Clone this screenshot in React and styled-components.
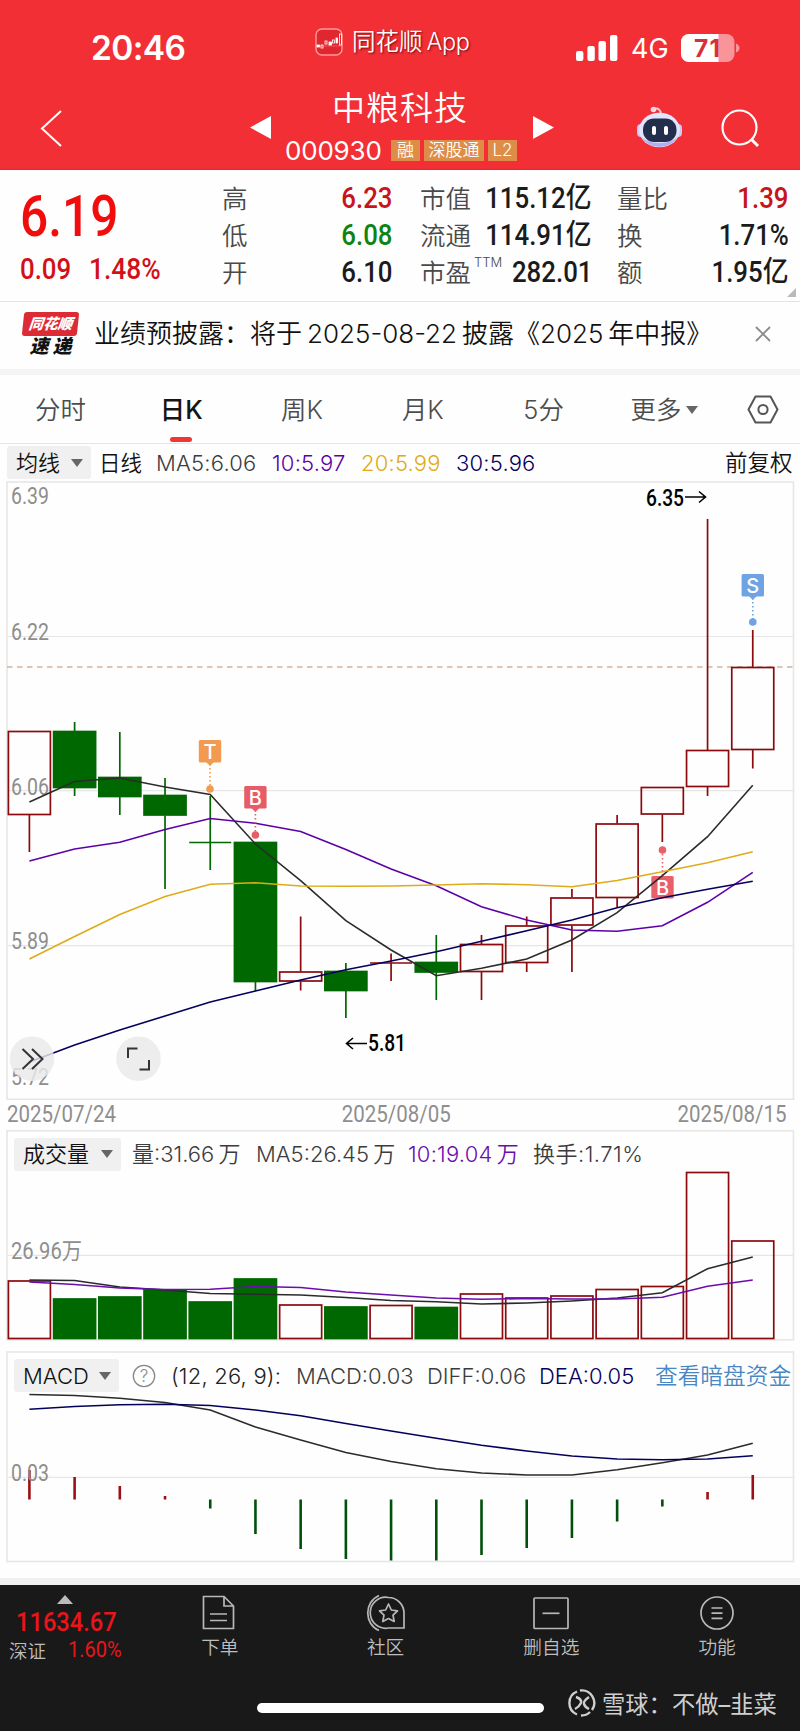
import React from 'react';
import styled, { createGlobalStyle } from 'styled-components';

const RED = '#8b0a0e';
const GREEN = '#006800';
const GRAY = '#8e8e8e';
const STEP = 45.21;
const FIRST_X = 29.4;

const GlobalStyle = createGlobalStyle`
  * {
    box-sizing: border-box;
  }

  body {
    margin: 0;
    background: #fefefe;
    font-family: Inter, 'Noto Sans CJK SC', sans-serif;
    color: #111;
  }

  svg {
    display: block;
  }
`;

const Page = styled.div`
  width: 800px;
  height: 1731px;
  display: flex;
  flex-direction: column;
  overflow: hidden;
  background: #fefefe;
`;

const Header = styled.header`
  height: 170px;
  flex: none;
  background: #f12f35;
  border-bottom: 1px solid #c8333a;
  color: white;
`;

const StatusBar = styled.div`
  height: 86px;
  padding: 10px 61px 0 91px;
  display: grid;
  grid-template-columns: 224px 261px 1fr;
  align-items: center;
`;

const Clock = styled.div`
  font-size: 33.5px;
  font-weight: 600;
  letter-spacing: -0.6px;
`;

const AppTag = styled.div`
  display: flex;
  align-items: center;
  gap: 9px;
  margin-top: -12px;
  font-size: 23.5px;
  font-weight: 350;
  line-height: 30px;
  text-shadow: 1px 1px 2px rgba(90, 0, 0, 0.8);

  span {
    margin-left: 4px;
    letter-spacing: -0.4px;
  }
`;

const Signals = styled.div`
  display: flex;
  align-items: center;
  font-size: 27px;
`;

const Network = styled.span`
  width: 50px;
  margin-left: 13px;
`;

const TitleBar = styled.div`
  height: 84px;
  display: flex;
  align-items: flex-start;
`;

const Slot = styled.div`
  width: ${({ $w }) => $w}px;
  padding-left: ${({ $left }) => $left || 0}px;
  padding-top: ${({ $top }) => $top || 0}px;
  flex: none;
`;

const StockTitle = styled.div`
  width: 262px;
  padding-left: 14px;
`;

const StockName = styled.div`
  height: 45px;
  padding-left: 47px;
  font-size: 33px;
  font-weight: 350;
  letter-spacing: 1px;
  line-height: 45px;
`;

const StockCode = styled.div`
  display: flex;
  align-items: center;
  height: 38px;
  gap: 4px;
  font-size: 26px;
  white-space: nowrap;

  span {
    width: 102px;
    letter-spacing: -0.2px;
  }
`;

const Tag = styled.div`
  height: 21px;
  min-width: 29px;
  padding: 0 4.5px;
  background: #dd8d48;
  font-size: 17px;
  font-weight: 350;
  line-height: 20px;
  text-align: center;
`;

const Quote = styled.section`
  height: 132px;
  flex: none;
  display: flex;
  border-bottom: 1px solid #e5e5e5;
`;

const Din = styled.span`
  display: inline-block;
  font-family: Roboto, 'Noto Sans CJK SC', sans-serif;
  font-weight: ${({ $weight }) => $weight || 500};
  font-size: ${({ $size }) => $size || 29}px;
  letter-spacing: ${({ $ls }) => $ls || 0}px;
  color: ${({ $color }) => $color || '#1b1b1b'};
  transform: scaleX(${({ $sx }) => $sx || 0.89});
  transform-origin: ${({ $origin }) => $origin || 'left'};
  line-height: 1;
  white-space: nowrap;
`;

const PriceBlock = styled.div`
  width: 222px;
  padding: 18px 0 0 20px;
`;

const Change = styled.div`
  display: flex;
  margin-top: 10px;

  > :first-child {
    width: 69px;
  }
`;

const StatColumn = styled.div`
  width: ${({ $w }) => $w}px;
  margin-right: ${({ $gap }) => $gap}px;
  padding-top: 10px;
`;

const Stat = styled.div`
  height: 37px;
  display: flex;
  align-items: center;
  justify-content: space-between;
  font-size: 25.5px;
  font-weight: 350;
  line-height: 33px;
  color: #4a4a4a;
  white-space: nowrap;

  sup {
    font-size: 13px;
    line-height: 0;
    vertical-align: 15px;
    margin-left: 3px;
  }
`;

const Corner = styled.div`
  align-self: flex-end;
  width: 0;
  height: 0;
  margin: 0 0 4px -2px;
  border-left: 9px solid transparent;
  border-bottom: 9px solid #b9b9b9;
`;

const News = styled.section`
  height: 73px;
  flex: none;
  display: flex;
  align-items: center;
  padding: 0 29px 3px 23px;
  border-bottom: 6px solid #f4f4f4;
  font-size: 26px;
  font-weight: 350;
`;

const ExpressLogo = styled.div`
  width: 55px;
  margin-right: 16px;
  text-align: center;
  font-weight: 900;
  font-style: italic;
  font-size: 19px;
  line-height: 20px;
  white-space: nowrap;
`;

const ExpressBadge = styled.div`
  height: 24px;
  margin-bottom: 1px;
  border-radius: 3px;
  background: #dd2b35;
  color: white;
  font-size: 14.5px;
  line-height: 23px;
  transform: skewX(-6deg);
`;

const NewsText = styled.div`
  flex: 1;
  display: flex;
  gap: 5px;
  line-height: 38px;
  white-space: nowrap;
`;

const Tabs = styled.nav`
  height: 69px;
  flex: none;
  display: flex;
  border-bottom: 1px solid #e5e5e5;
`;

const Tab = styled.div`
  width: 120.8px;
  display: flex;
  flex-direction: column;
  align-items: center;
  font-size: 25.4px;
  font-weight: ${({ $active }) => ($active ? 500 : 350)};
  color: ${({ $active }) => ($active ? '#151515' : '#4d4d4d')};
  line-height: 70px;
  white-space: nowrap;

  &::after {
    content: '';
    width: 22px;
    height: 5px;
    margin-top: -8px;
    border-radius: 3px;
    background: ${({ $active }) => ($active ? '#ef3836' : 'transparent')};
  }
`;

const Row = styled.div`
  display: flex;
  align-items: center;
  gap: ${({ $gap }) => $gap || 0}px;
`;

const Caret = styled.i`
  width: 0;
  height: 0;
  border: 6px solid transparent;
  border-top: 8px solid #666;
  border-bottom: 0;
`;

const LegendRow = styled.div`
  height: ${({ $h }) => $h || 37}px;
  padding-left: ${({ $left }) => $left || 7}px;
  display: flex;
  flex: none;
  align-items: center;
  grid-area: 1 / 1;
  font-weight: 350;
`;

const Chip = styled.div`
  width: ${({ $w }) => $w}px;
  height: 33px;
  margin-right: ${({ $gap }) => $gap}px;
  padding: 0 8px 0 9px;
  display: flex;
  align-items: center;
  justify-content: space-between;
  border-radius: 3px;
  background: #f0f0f0;
  font-size: 22px;
  line-height: 30px;
`;

const Legend = styled.span`
  width: ${({ $w }) => $w}px;
  flex: none;
  font-size: ${({ $size }) => $size || 22}px;
  letter-spacing: ${({ $ls }) => $ls || 0}px;
  word-spacing: ${({ $ws }) => $ws || 0}px;
  color: ${({ $color }) => $color || '#3c3c3c'};
  line-height: 32px;
  white-space: nowrap;
`;

const Panel = styled.section`
  display: grid;
  grid-template-rows: ${({ $h }) => $h}px;
  align-items: start;
  flex: none;

  > svg {
    grid-area: 1 / 1;
  }
`;

const Dates = styled.div`
  height: 30px;
  flex: none;
  padding: 0 14px 2px 7px;
  display: flex;
  align-items: center;
  justify-content: space-between;
`;

const Gap = styled.div`
  height: 11px;
  flex: none;
`;

const BottomBar = styled.footer`
  height: 153px;
  margin-top: auto;
  flex: none;
  border-top: 7px solid #f1f1f1;
  background: #191919;
  color: #bdbdbd;
`;

const BottomItems = styled.div`
  height: 96px;
  display: flex;
`;

const IndexBlock = styled.div`
  width: 137px;
  padding-top: 10px;
  font-size: 18.5px;
  font-weight: 350;
`;

const UpArrow = styled.div`
  width: 0;
  margin: 0 0 5px 57px;
  border: 8px solid transparent;
  border-bottom: 9px solid #bbb;
  border-top: 0;
`;

const NavItem = styled.div`
  width: 165.8px;
  padding-top: 9px;
  display: flex;
  flex-direction: column;
  align-items: center;
  gap: 3px;
  font-size: 18.7px;
  font-weight: 350;
  line-height: 26px;
`;

const HomeRow = styled.div`
  display: flex;
  align-items: center;
  height: 44px;
  padding-left: 257px;
`;

const HomeIndicator = styled.div`
  width: 287px;
  height: 10px;
  margin: 9px 24px 0 0;
  border-radius: 5px;
  background: white;
`;

const Watermark = styled.div`
  display: flex;
  align-items: center;
  gap: 6px;
  color: #cfcfcf;
  font-size: 23.3px;
  white-space: nowrap;
`;

// [up, top, bottom, high, low]
const candles = [
  [1, 731, 815, 731, 852],
  [0, 731, 788, 722, 796],
  [0, 777, 797, 732, 815],
  [0, 795, 815.5, 778, 889],
  [0, 842, 843, 796, 870],
  [0, 842, 982, 842, 991],
  [1, 971.5, 981.5, 916.5, 990.5],
  [0, 971, 991, 963, 1018],
  [1, 962.5, 963, 953.5, 981],
  [0, 962, 972.5, 935, 1000],
  [1, 944, 972, 935, 1000],
  [1, 925.5, 963, 916.5, 972],
  [1, 897.5, 925.5, 889, 972],
  [1, 823.5, 898, 815, 907],
  [1, 787, 814.5, 787, 842],
  [1, 750, 787, 519, 796],
  [1, 667, 750, 630, 768.5],
];

const priceLines = [
  ['#2b2b2b', [802, 781.5, 778, 787, 794.5, 844, 880.7, 920.7, 950, 975.7, 968.3, 959, 940, 912.7, 875.7, 836.7, 785.3]],
  ['#5c00a8', [861, 849, 842.3, 829.5, 818.5, 823.3, 831.5, 849.5, 869, 885.7, 906.7, 920, 930, 931.3, 925.7, 902.3, 872.3]],
  ['#dfab18', [959, 936.5, 914.5, 896.5, 884.2, 882.8, 886, 886.3, 886, 885, 883.7, 884.7, 886.7, 880.5, 871.7, 862.7, 851.7]],
  ['#05005c', [1062, 1045, 1030, 1016, 1002, 991, 980, 969.7, 961, 951.7, 941.3, 930.7, 920, 907.7, 897.7, 889.3, 881.3]],
];

const volumes = [1281, 1299, 1297, 1290, 1302, 1279, 1305, 1307, 1305.5, 1307.5, 1294, 1298, 1296, 1289.5, 1286.5, 1172.5, 1241];

const volumeLines = [
  ['#2b2b2b', [1280, 1280.5, 1287, 1290, 1293.5, 1294.3, 1295, 1297.5, 1300.5, 1301.7, 1304, 1303, 1301, 1298, 1292.7, 1268.7, 1257]],
  ['#6a0dad', [1282, 1284.5, 1288, 1289.5, 1289.3, 1286.5, 1287.5, 1292, 1295, 1298, 1299.3, 1298.5, 1299, 1299, 1297.3, 1286.3, 1280]],
];

const macdBars = [1470, 1477, 1486, 1496, 1508.5, 1534, 1549, 1559, 1560.5, 1560.5, 1555, 1548, 1538, 1521.5, 1506.5, 1492, 1475];

const macdLines = [
  ['#2b2b2b', [1394.5, 1395.5, 1398.3, 1402.5, 1410, 1427, 1440, 1452.5, 1461.5, 1468.7, 1473, 1475, 1475, 1469.7, 1462.7, 1455, 1443.3]],
  ['#05005c', [1409.3, 1406.5, 1404.7, 1404.3, 1405.5, 1410, 1415.7, 1423.5, 1431, 1438.3, 1445.3, 1451, 1456, 1459, 1459.7, 1459, 1455.7]],
];

const xAt = (i) => FIRST_X + STEP * i;

const Line = ({ color, values }) => (
  <polyline
    points={values.map((y, i) => `${xAt(i)},${y}`).join(' ')}
    fill="none"
    stroke={color}
    strokeWidth="1.6"
  />
);

const Frame = ({ y, h, grid }) => (
  <g stroke="#e6e6e6" fill="none">
    <rect x="7" y={y} width="786.5" height={h} strokeWidth="1.6" />
    {grid.map((g) => (
      <path key={g} d={`M8 ${g}H793`} strokeWidth="1.2" />
    ))}
  </g>
);

const AxisText = ({ x = 11, y, w = 38, color = GRAY, weight = 400, children }) => (
  <text
    x={x}
    y={y}
    textLength={w}
    lengthAdjust="spacingAndGlyphs"
    fontFamily="Roboto, 'Noto Sans CJK SC', sans-serif"
    fontSize="23"
    fontWeight={weight}
    fill={color}
  >
    {children}
  </text>
);

const Marker = ({ x, top, dot, color, letter }) => {
  const below = dot < top;
  return (
    <g fill={color}>
      <path
        d={below ? `M${x} ${dot + 4}V${top}` : `M${x} ${top + 24}V${dot - 3}`}
        stroke={color}
        strokeWidth="1.6"
        strokeDasharray="1.6 2.4"
      />
      <rect x={x - 11.2} y={top} width="22.4" height="22.6" rx="1.5" />
      {!below && <path d={`M${x - 4} ${top + 22}h8l-4 4z`} />}
      <circle cx={x} cy={dot} r="3.8" />
      <text x={x} y={top + 18.6} textAnchor="middle" fontSize="20" fontWeight="500" fill="#fff" fontFamily="Inter">
        {letter}
      </text>
    </g>
  );
};

const PriceChart = () => (
  <svg width="800" height="619" viewBox="0 481 800 619">
    <Frame y={482} h={617.3} grid={[636.5, 790.6, 945.6]} />
    <path d="M7 667H793" stroke="#d3b49c" strokeWidth="1.4" strokeDasharray="5.5 4.5" />
    {candles.map(([up, top, bottom, high, low], i) => {
      const color = up ? RED : GREEN;
      const doji = bottom - top < 2;
      return (
        <g key={i} stroke={color} strokeWidth="1.7" fill={up ? 'none' : color}>
          <path d={`M${xAt(i)} ${high}V${top}M${xAt(i)} ${bottom}V${low}`} />
          {doji ? (
            <path d={`M${xAt(i) - 21} ${top + 0.5}h42`} />
          ) : (
            <rect x={xAt(i) - 21} y={top + 0.5} width="42" height={bottom - top - 1} />
          )}
        </g>
      );
    })}
    <AxisText y={504}>6.39</AxisText>
    <AxisText y={640}>6.22</AxisText>
    <AxisText y={794.5}>6.06</AxisText>
    <AxisText y={949}>5.89</AxisText>
    <AxisText y={1085}>5.72</AxisText>
    <Marker x={662.5} top={876} dot={850} color="#e8606a" letter="B" />
    {priceLines.map(([color, values]) => (
      <Line key={color} color={color} values={values} />
    ))}
    <Marker x={210} top={740} dot={789} color="#f29b50" letter="T" />
    <Marker x={255.4} top={786} dot={835} color="#e75d67" letter="B" />
    <Marker x={752.8} top={574} dot={622} color="#6fa3e4" letter="S" />
    <AxisText x={646} y={505.5} color="#000" weight={500}>6.35</AxisText>
    <path d="M685 497H705M699 491.5L705.5 497L699 502.5" fill="none" stroke="#000" strokeWidth="1.6" />
    <AxisText x={368} y={1051} w={38} color="#000" weight={500}>5.81</AxisText>
    <path d="M367 1043.5H347M353 1038L346.5 1043.5L353 1049" fill="none" stroke="#000" strokeWidth="1.6" />
    <g fill="#e9e9e9" fillOpacity="0.82">
      <circle cx="32" cy="1058.7" r="22.3" />
      <circle cx="138.5" cy="1058.7" r="22.3" />
    </g>
    <g fill="none" stroke="#333338" strokeWidth="2">
      <path d="M22.5 1049L33 1059L22.5 1069M32 1049L42.5 1059L32 1069" />
      <path d="M128 1058V1048.5H137.5M149 1060V1069.5H139.5" />
    </g>
  </svg>
);

const VolumeChart = () => (
  <svg width="800" height="211" viewBox="0 1130 800 211">
    <Frame y={1130.8} h={209} grid={[1255.4]} />
    {volumes.map((top, i) => {
      const up = candles[i][0];
      return (
        <rect
          key={i}
          x={xAt(i) - 21}
          y={top}
          width="42"
          height={1338.5 - top}
          fill={up ? 'none' : GREEN}
          stroke={up ? RED : GREEN}
          strokeWidth="1.7"
        />
      );
    })}
    {volumeLines.map(([color, values]) => (
      <Line key={color} color={color} values={values} />
    ))}
    <AxisText y={1259} w={71}>26.96万</AxisText>
  </svg>
);

const MacdChart = () => (
  <svg width="800" height="212" viewBox="0 1351 800 212">
    <Frame y={1352} h={209.5} grid={[1477.4]} />
    {macdBars.map((y, i) => (
      <path key={i} d={`M${xAt(i)} 1499.5V${y}`} stroke={y < 1499 ? '#9b1013' : '#00500a'} strokeWidth="2.6" />
    ))}
    {macdLines.map(([color, values]) => (
      <Line key={color} color={color} values={values} />
    ))}
    <AxisText y={1480.5}>0.03</AxisText>
  </svg>
);

const AppIcon = () => (
  <svg width="28" height="28" viewBox="0 0 28 28">
    <rect x="1" y="1" width="26" height="26" rx="6" fill="#e0262e" stroke="#f99" strokeWidth="1.4" />
    <path d="M1 18H28" stroke="#f77" strokeWidth=".6" />
    <g fill="#fff" stroke="#fff" strokeWidth=".8">
      <rect x="2" y="17" width="2.5" height="2" />
      <rect x="6" y="17" width="2" height="3" fill="none" />
      <rect x="10" y="13" width="2" height="3" fill="none" />
      <rect x="14" y="14" width="2.5" height="3" />
      <rect x="17.5" y="12" width="2" height="3" fill="none" />
      <rect x="21" y="10" width="1.5" height="5" />
      <rect x="24.5" y="6" width="2" height="11" fill="none" />
    </g>
  </svg>
);

const SignalIcon = () => (
  <svg width="42" height="28" viewBox="0 0 42 28" fill="#fff">
    <rect x="0" y="17" width="7.4" height="10" rx="2" />
    <rect x="11.4" y="12" width="7.4" height="15" rx="2" />
    <rect x="22.5" y="7" width="7.4" height="20" rx="2" />
    <rect x="34" y="1" width="7.4" height="26" rx="2" />
  </svg>
);

const Battery = () => (
  <svg width="60" height="28" viewBox="0 0 60 28">
    <rect width="53.5" height="28" rx="8" fill="#f99499" />
    <path d="M8 0H37.5V28H8A8 8 0 0 1 0 20V8A8 8 0 0 1 8 0Z" fill="#fff" />
    <path d="M55 9.5Q58.5 11 58.5 14T55 18.5Z" fill="#f99499" />
    <text x="13" y="22.8" fontSize="24.5" fontWeight="700" fill="#d8303a" fontFamily="Inter" textLength="26">
      71
    </text>
  </svg>
);

const Robot = () => (
  <svg width="46" height="42" viewBox="0 0 46 42">
    <path d="M17 3Q23 1 24 8" fill="none" stroke="#f6c8d8" strokeWidth="2" />
    <circle cx="16.5" cy="3.5" r="2.8" fill="#fbd9dc" />
    <rect x="0" y="18" width="8" height="13" rx="4" fill="#c9c9f8" />
    <rect x="37" y="18" width="8" height="13" rx="4" fill="#c9c9f8" />
    <ellipse cx="22.5" cy="24" rx="20.5" ry="17.3" fill="#e3e5fd" />
    <path d="M4 30Q10 41 22.5 41T41 30Q36 37 22.5 37T4 30Z" fill="#b3aef0" />
    <rect x="6" y="12.5" width="33.5" height="23.5" rx="11" fill="#222e4b" />
    <rect x="15" y="20" width="4" height="9" rx="2" fill="#fff" />
    <rect x="27" y="20" width="4" height="9" rx="2" fill="#fff" />
  </svg>
);

const iconProps = { fill: 'none', stroke: '#b8b8b8', strokeWidth: 1.7 };

const navItems = [
  {
    label: '下单',
    icon: (
      <svg width="36" height="38" viewBox="0 0 36 38" {...iconProps}>
        <path d="M1.5 2.5H22L31.5 12V34.5H1.5ZM22 2.5V12H31.5M8 20H25M8 26.5H25" />
      </svg>
    ),
  },
  {
    label: '社区',
    icon: (
      <svg width="40" height="38" viewBox="0 0 40 38" {...iconProps}>
        <path d="M13 1.5C-2 8 -2 30 13 36.5" />
        <path d="M22.5 3.5A15.5 15.5 0 1 0 22.5 34H38V19A15.5 15.5 0 0 0 22.5 3.5Z" />
        <path d="M22.5 10L25.3 16L31.5 16.8L27 21.2L28.2 27.5L22.5 24.5L16.8 27.5L18 21.2L13.5 16.8L19.7 16Z" strokeLinejoin="round" />
      </svg>
    ),
  },
  {
    label: '删自选',
    icon: (
      <svg width="38" height="38" viewBox="0 0 38 38" {...iconProps}>
        <rect x="2" y="4" width="34" height="30.5" rx="1" />
        <path d="M10.5 19.3H27.5" />
      </svg>
    ),
  },
  {
    label: '功能',
    icon: (
      <svg width="38" height="38" viewBox="0 0 38 38" {...iconProps}>
        <circle cx="19" cy="19" r="16" />
        <path d="M13.5 14H24.5M13.5 19.2H24.5M13.5 24.3H24.5" />
      </svg>
    ),
  },
];

const App = () => {
  return (
    <Page>
      <GlobalStyle />
      <Header>
        <StatusBar>
          <Clock>20:46</Clock>
          <AppTag>
            <AppIcon />
            <div>同花顺<span>App</span></div>
          </AppTag>
          <Signals>
            <SignalIcon />
            <Network>4G</Network>
            <Battery />
          </Signals>
        </StatusBar>
        <TitleBar>
          <Slot $w={249} $left={40} $top={23}>
            <svg width="24" height="40" viewBox="0 0 24 40">
              <path d="M21 2L2 19.5L21 37" fill="none" stroke="#fff" strokeWidth="2" />
            </svg>
          </Slot>
          <Slot $w={22} $top={30}>
            <svg width="22" height="24"><path d="M1 11.5L22 0V23Z" fill="#fff" /></svg>
          </Slot>
          <StockTitle>
            <StockName>中粮科技</StockName>
            <StockCode>
              <span>000930</span>
              <Tag>融</Tag>
              <Tag>深股通</Tag>
              <Tag>L2</Tag>
            </StockCode>
          </StockTitle>
          <Slot $w={104} $top={30}>
            <svg width="22" height="24"><path d="M21 11.5L0 0V23Z" fill="#fff" /></svg>
          </Slot>
          <Slot $w={83} $top={20}>
            <Robot />
          </Slot>
          <Slot $w={42} $top={22}>
            <svg width="42" height="42" viewBox="0 0 42 42" fill="none" stroke="#fff" strokeWidth="2.2">
              <circle cx="19.5" cy="19.5" r="17" />
              <path d="M31 31L38 38" strokeWidth="3" />
            </svg>
          </Slot>
        </TitleBar>
      </Header>

      <Quote>
        <PriceBlock>
          <Din $size={57} $sx={0.87} $color="#f20d0d">6.19</Din>
          <Change>
            <Din $color="#d31018">0.09</Din>
            <Din $sx={0.91} $color="#d31018">1.48%</Din>
          </Change>
        </PriceBlock>
        <StatColumn $w={171} $gap={27}>
          <Stat>高<Din $origin="right" $color="#c8141b">6.23</Din></Stat>
          <Stat>低<Din $origin="right" $color="#0d8411">6.08</Din></Stat>
          <Stat>开<Din $origin="right">6.10</Din></Stat>
        </StatColumn>
        <StatColumn $w={171} $gap={26}>
          <Stat>市值<Din $origin="right">115.12亿</Din></Stat>
          <Stat>流通<Din $origin="right">114.91亿</Din></Stat>
          <Stat><div>市盈<sup>TTM</sup></div><Din $origin="right">282.01</Din></Stat>
        </StatColumn>
        <StatColumn $w={172} $gap={0}>
          <Stat>量比<Din $origin="right" $color="#c8141b">1.39</Din></Stat>
          <Stat>换<Din $origin="right">1.71%</Din></Stat>
          <Stat>额<Din $origin="right">1.95亿</Din></Stat>
        </StatColumn>
        <Corner />
      </Quote>

      <News>
        <ExpressLogo>
          <ExpressBadge>同花顺</ExpressBadge>
          速 递
        </ExpressLogo>
        <NewsText>
          <span>业绩预披露：将于</span>
          <span>2025-08-22</span>
          <span>披露《2025</span>
          <span>年中报》</span>
        </NewsText>
        <svg width="16" height="16" viewBox="0 0 16 16">
          <path d="M1 1L15 15M15 1L1 15" stroke="#8a8a8a" strokeWidth="1.8" />
        </svg>
      </News>

      <Tabs>
        <Tab>分时</Tab>
        <Tab $active>日K</Tab>
        <Tab>周K</Tab>
        <Tab>月K</Tab>
        <Tab>5分</Tab>
        <Tab>
          <Row $gap={5}>更多<Caret /></Row>
        </Tab>
        <Slot $w={60} $left={22} $top={20}>
          <svg width="32" height="30" viewBox="0 0 32 30" fill="none" stroke="#555" strokeWidth="2">
            <path d="M8.5 1.5H23.5L30.5 14.5L23.5 27.5H8.5L1.5 14.5Z" strokeLinejoin="round" />
            <circle cx="16" cy="14.5" r="4.6" />
          </svg>
        </Slot>
      </Tabs>

      <LegendRow>
        <Chip $w={84} $gap={8}>均线<Caret /></Chip>
        <Legend $w={57} $size={21.5} $color="#111">日线</Legend>
        <Legend $w={116} $ls={0.2}>MA5:6.06</Legend>
        <Legend $w={89} $ls={0.2} $color="#5c00a8">10:5.97</Legend>
        <Legend $w={95} $ls={0.2} $color="#dfab18">20:5.99</Legend>
        <Legend $w={269} $ls={0.2} $color="#05005c">30:5.96</Legend>
        <Legend $w={70} $size={22.5} $color="#111">前复权</Legend>
      </LegendRow>
      <Panel $h={619}>
        <PriceChart />
      </Panel>
      <Dates>
        <Din $size={23} $weight={400} $color={GRAY}>2025/07/24</Din>
        <Din $size={23} $weight={400} $color={GRAY} $origin="center">2025/08/05</Din>
        <Din $size={23} $weight={400} $color={GRAY} $origin="right">2025/08/15</Din>
      </Dates>
      <Panel $h={210}>
        <VolumeChart />
        <LegendRow $left={14} $h={48}>
          <Chip $w={107} $gap={11}>成交量<Caret /></Chip>
          <Legend $w={124} $ws={-2}>量:31.66 万</Legend>
          <Legend $w={152} $ws={-2}>MA5:26.45 万</Legend>
          <Legend $w={125} $ws={-2} $ls={0.2} $color="#6a0dad">10:19.04 万</Legend>
          <Legend $w={120} $ls={0.5}>换手:1.71%</Legend>
        </LegendRow>
      </Panel>
      <Gap />
      <Panel $h={212}>
        <MacdChart />
        <LegendRow $left={14} $h={49}>
          <Chip $w={105} $gap={13}>MACD<Caret /></Chip>
          <Slot $w={39}>
            <svg width="24" height="24" viewBox="0 0 24 24">
              <circle cx="12" cy="12" r="10.7" fill="none" stroke="#888" strokeWidth="1.3" />
              <text x="12" y="18" textAnchor="middle" fontSize="17" fill="#888" fontFamily="Inter">?</text>
            </svg>
          </Slot>
          <Legend $w={125} $ls={0.2} $color="#222">(12, 26, 9):</Legend>
          <Legend $w={131}>MACD:0.03</Legend>
          <Legend $w={112}>DIFF:0.06</Legend>
          <Legend $w={116} $color="#05005c">DEA:0.05</Legend>
          <Legend $w={138} $size={22.7} $color="#4787c4">查看暗盘资金</Legend>
        </LegendRow>
      </Panel>

      <BottomBar>
        <BottomItems>
          <IndexBlock>
            <UpArrow />
            <Slot $w={137} $left={16}>
              <Din $size={26} $sx={0.91} $color="#e8151b">11634.67</Din>
            </Slot>
            <Slot $w={137} $left={9} $top={2}>
              <Row $gap={22}>
                深证
                <Din $size={22} $weight={400} $color="#e8151b" $sx={0.91}>1.60%</Din>
              </Row>
            </Slot>
          </IndexBlock>
          {navItems.map(({ label, icon }) => (
            <NavItem key={label}>
              {icon}
              {label}
            </NavItem>
          ))}
        </BottomItems>
        <HomeRow>
          <HomeIndicator />
          <Watermark>
            <svg width="28" height="28" viewBox="0 0 28 28" fill="none" stroke="#cfcfcf" strokeWidth="2.4">
              <path d="M9 2.5A12.5 12.5 0 0 0 9 25.5M12 1.5A12.5 12.5 0 0 1 24 21M22 23A12.5 12.5 0 0 1 13 26.5" />
              <path d="M8 8Q14 10 13 14Q11 18 7 20M21 8Q15 12 16 15Q17 18 21 20" />
            </svg>
            雪球：不做–韭菜
          </Watermark>
        </HomeRow>
      </BottomBar>
    </Page>
  );
};

export default App;
